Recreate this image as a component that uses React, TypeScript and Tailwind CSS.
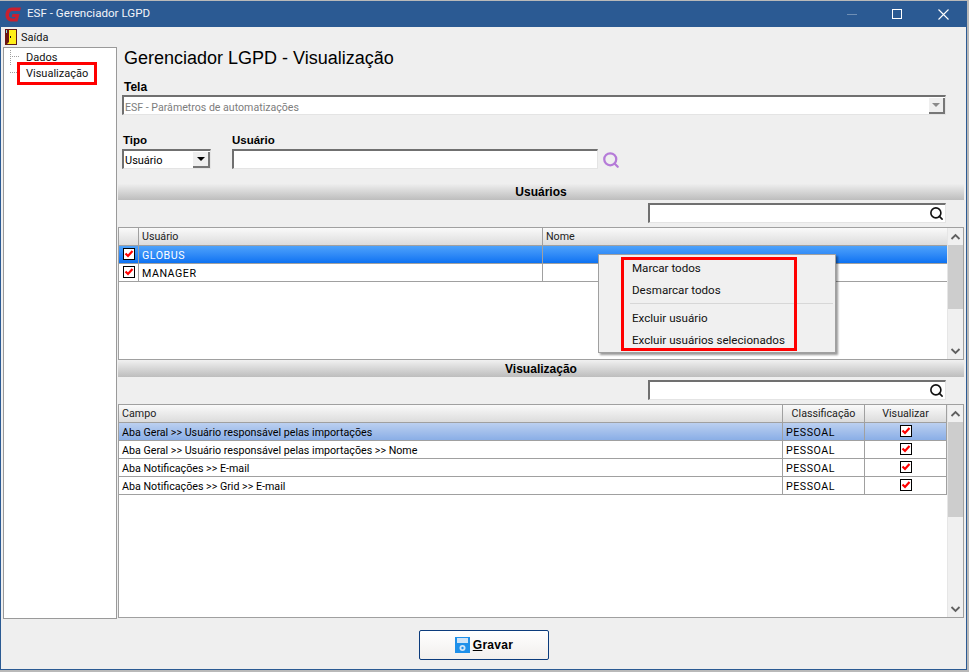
import { Search } from "lucide-react";

const font = "font-['Roboto',Arial,sans-serif]";
const sunken = "border border-t-2 border-l-2 border-t-[#707070] border-l-[#707070] border-r-[#e4e4e4] border-b-[#e4e4e4] bg-white";

function Check() {
  return (
    <svg width="12" height="12" viewBox="0 0 12 12" className="block">
      <rect x="0.5" y="0.5" width="11" height="11" fill="#fff" stroke="#000" />
      <path d="M2.5 5.5 L5 8 L9.5 3" fill="none" stroke="#f00" strokeWidth="2.2" />
    </svg>
  );
}

function Arrow({ dir }: { dir: "up" | "down" }) {
  return (
    <svg width="11" height="8" viewBox="0 0 11 8">
      <path d={dir === "up" ? "M1.5 6 L5.5 2 L9.5 6" : "M1.5 2 L5.5 6 L9.5 2"} fill="none" stroke="#606060" strokeWidth="1.8" />
    </svg>
  );
}

function SectionBar({ title }: { title: string }) {
  return (
    <div className="flex h-[16px] items-center justify-center bg-gradient-to-b from-[#eeeeee] to-[#bdbdbd] font-['Liberation_Sans',Arial,sans-serif] text-[12px] font-bold leading-none text-black">
      {title}
    </div>
  );
}

function SearchBox() {
  return (
    <div className="flex h-[27px] items-start justify-end pt-[3px] pr-[18px]">
      <div className={`flex h-[20px] w-[298px] items-center justify-end pr-[1px] ${sunken}`}>
        <Search size={15} strokeWidth={2.6} color="#111" />
      </div>
    </div>
  );
}

function Scrollbar({ thumb }: { thumb: number }) {
  return (
    <div className="flex w-[16px] flex-col border-l border-[#e6e6e6] bg-[#f0f0f0]">
      <div className="flex h-[17px] items-center justify-center"><Arrow dir="up" /></div>
      <div className="flex-1">
        <div className="bg-[#cdcdcd]" style={{ height: thumb }} />
      </div>
      <div className="flex h-[17px] items-center justify-center"><Arrow dir="down" /></div>
    </div>
  );
}

const headCell = "flex h-[18px] items-center border-r border-b border-[#a0a0a0] bg-gradient-to-b from-[#fafafa] to-[#dcdcdc] px-[3px] pt-[1px] text-[10.7px] text-[#222]";
const rowCell = "flex h-[18px] items-center border-r border-b border-[#a0a0a0] px-[3px] pt-[3px] text-[10.7px]";
const checkCell = "flex h-[18px] items-center justify-center border-r border-b border-[#a0a0a0] pb-[1px]";

const campos = [
  "Aba Geral >> Usuário responsável pelas importações",
  "Aba Geral >> Usuário responsável pelas importações >> Nome",
  "Aba Notificações >> E-mail",
  "Aba Notificações >> Grid >> E-mail",
];

export default function App() {
  return (
    <div className={`flex h-[672px] w-[969px] flex-col overflow-hidden bg-[#b9b9b9] ${font} text-[11px] text-black`}>
      <div className="mt-[1px] mr-[2px] flex h-[669px] flex-col border-x border-b border-[#2b5a93] bg-[#efefef]">
        {/* barra de titulo */}
        <div className="flex h-[26px] shrink-0 items-center bg-[#2b5a93] pl-[4px] text-white">
          <svg width="17" height="17" viewBox="0 0 17 17">
            <path d="M16 1.5 L7 1.5 C3 1.5 0.5 5 0.5 9 C0.5 13 3 15.5 7 15.5 L12.5 15.5 L14.5 8 L7.5 8 L6.7 11 L10.5 11 L10 12.5 L7.5 12.5 C5.2 12.5 4 11 4 9 C4 6.5 5.6 5 7.5 5 L15 5 Z" fill="#c8202f" />
          </svg>
          <span className="ml-[5px] text-[11.6px] text-[#f2f5f9]">ESF - Gerenciador LGPD</span>
          <div className="ml-auto flex items-center">
            <div className="h-[1px] w-[10px] bg-[#6f8fb5]" />
            <div className="ml-[35px] h-[10px] w-[10px] border border-white" />
            <svg width="11" height="11" viewBox="0 0 11 11" className="mr-[17px] ml-[36px]">
              <path d="M0.5 0.5 L10.5 10.5 M10.5 0.5 L0.5 10.5" stroke="#fff" strokeWidth="1.1" />
            </svg>
          </div>
        </div>

        {/* menu */}
        <div className="flex h-[19px] shrink-0 items-center pl-[4px]">
          <svg width="12" height="16" viewBox="0 0 12 16">
            <rect width="12" height="16" fill="#ffef1a" />
            <path d="M0 0 H4 V13 L1 16 H0 Z" fill="#6b1515" />
            <rect x="4" y="0" width="8" height="1" fill="#5b1b1b" />
            <rect x="11" y="0" width="1" height="16" fill="#5b1b1b" />
            <rect x="1" y="15" width="11" height="1" fill="#5b1b1b" />
            <rect x="5" y="7" width="1" height="2" fill="#111" />
            <rect x="1" y="1" width="1" height="3" fill="#7fd4e0" />
          </svg>
          <span className="ml-[4px] pt-[3px] text-[11px] text-[#111]">Saída</span>
        </div>

        <div className="flex flex-1">
          {/* arvore */}
          <div className="relative ml-[2px] mt-[1px] h-[572px] w-[114px] border border-[#9a9a9a] bg-white">
            <div className="mt-[2px] ml-[6px] h-[15px] border-l border-dotted border-[#a0a0a0]" />
            <div className="absolute top-[8px] left-[6px] h-[1px] w-[9px] border-t border-dotted border-[#a0a0a0]" />
            <div className="absolute top-[24px] left-[6px] h-[1px] w-[9px] border-t border-dotted border-[#a0a0a0]" />
            <div className="absolute top-[2px] left-[22px] text-[11px] leading-[15px] text-[#111]">Dados</div>
            <div className="absolute top-[18px] left-[22px] text-[11px] leading-[15px] text-[#111]">Visualização</div>
            <div className="absolute top-[14px] left-[13px] h-[23px] w-[80px] border-[3px] border-[#f00]" />
          </div>

          {/* conteudo */}
          <div className="ml-[1px] flex w-[846px] flex-col">
            <div className="pl-[6px] pt-[1px]">
              <h1 className="h-[24px] font-['Liberation_Sans',Arial,sans-serif] text-[18px] leading-[22px] text-black">Gerenciador LGPD - Visualização</h1>
              <div className="mt-[9px] h-[14px] font-['Liberation_Sans',Arial,sans-serif] text-[12px] font-bold leading-[14px]">Tela</div>
              <div className="-ml-[2px] mt-[1px] flex h-[20px] w-[824px] items-center justify-between border border-t-2 border-l-2 border-t-[#707070] border-l-[#707070] border-r-[#e4e4e4] border-b-[#e4e4e4] bg-white pl-[1px]">
                <span className="pt-[4px] text-[10.6px] text-[#7d7d7d]">ESF - Parâmetros de automatizações</span>
                <div className="flex h-[16px] w-[16px] items-center justify-center border-r-2 border-b-2 border-[#777] bg-[#efefef]">
                  <div className="h-0 w-0 border-x-[4px] border-t-[4px] border-x-transparent border-t-[#8a8a8a]" />
                </div>
              </div>
            </div>

            <div className="mt-[18px] flex items-start pl-[4px] font-['Liberation_Sans',Arial,sans-serif]">
              <div className="w-[110px]">
                <div className="h-[14px] pl-[1px] text-[11.5px] font-bold leading-[14px]">Tipo</div>
                <div className={`mt-[2px] flex h-[20px] w-[89px] items-center justify-between pl-[1px] ${sunken}`}>
                  <span className="pt-[3px] font-['Roboto',Arial,sans-serif] text-[11px]">Usuário</span>
                  <div className="flex h-[16px] w-[17px] items-center justify-center border-r-2 border-b-2 border-[#777] bg-[#efefef]">
                    <div className="h-0 w-0 border-x-[4px] border-t-[4px] border-x-transparent border-t-black" />
                  </div>
                </div>
              </div>
              <div>
                <div className="h-[14px] text-[11.5px] font-bold leading-[14px]">Usuário</div>
                <div className="mt-[2px] flex items-center">
                  <div className={`h-[20px] w-[366px] ${sunken}`} />
                  <Search size={18} strokeWidth={3} color="#b57bd8" className="ml-[4px] mt-[2px]" />
                </div>
              </div>
            </div>

            <div className="mt-[15px]">
              <SectionBar title="Usuários" />
              <SearchBox />
              {/* tabela usuarios */}
              <div className="relative flex h-[133px] w-[846px] border border-[#a0a0a0] bg-white">
                <div className="flex-1">
                  <div className="grid grid-cols-[20px_404px_1fr]">
                    <div className={headCell} />
                    <div className={headCell}>Usuário</div>
                    <div className={`${headCell} border-r-0`}>Nome</div>
                    <div className={`${checkCell} bg-gradient-to-b from-[#4da2fb] to-[#0a72f2]`}><Check /></div>
                    <div className={`${rowCell} bg-gradient-to-b from-[#4da2fb] to-[#0a72f2] tracking-[0.5px] text-white`}>GLOBUS</div>
                    <div className={`${rowCell} border-r-0 bg-gradient-to-b from-[#4da2fb] to-[#0a72f2]`} />
                    <div className={checkCell}><Check /></div>
                    <div className={`${rowCell} tracking-[0.5px]`}>MANAGER</div>
                    <div className={`${rowCell} border-r-0`} />
                  </div>
                </div>
                <Scrollbar thumb={64} />

                {/* menu de contexto */}
                <div className="absolute top-[26px] left-[479px] flex h-[99px] w-[238px] flex-col border border-[#a0a0a0] bg-[#f0f0f0] pl-[33px] text-[11.6px] text-[#111] shadow-[2px_2px_2px_rgba(0,0,0,0.4)]">
                  <div className="mt-[2px] flex h-[24px] items-center">Marcar todos</div>
                  <div className="flex h-[20px] items-center">Desmarcar todos</div>
                  <div className="-ml-[2px] mr-[2px] mt-[2px] mb-[4px] h-[1px] bg-[#d7d7d7]" />
                  <div className="flex h-[22px] items-center">Excluir usuário</div>
                  <div className="flex h-[21px] items-center">Excluir usuários selecionados</div>
                  <div className="absolute top-[2px] left-[22px] h-[94px] w-[176px] border-[3px] border-[#f00]" />
                </div>
              </div>
              <div className="h-[1px]" />
            </div>

            <div>
              <SectionBar title="Visualização" />
              <SearchBox />
              {/* tabela campos */}
              <div className="flex h-[214px] w-[846px] border border-[#a0a0a0] bg-white">
                <div className="flex-1">
                  <div className="grid grid-cols-[664px_82px_1fr]">
                    <div className={`${headCell} px-[2px]`}>Campo</div>
                    <div className={`${headCell} justify-center`}>Classificação</div>
                    <div className={`${headCell} justify-center`}>Visualizar</div>
                    {campos.map((c, i) => {
                      const sel = i === 0 ? "bg-gradient-to-b from-[#bcd0f0] to-[#8aaee6]" : "";
                      return [
                        <div key={c} className={`${rowCell} px-[2px] ${sel}`}>{c}</div>,
                        <div key={c + "p"} className={`${rowCell} tracking-[0.5px] ${sel}`}>PESSOAL</div>,
                        <div key={c + "v"} className={`${checkCell} ${sel}`}><Check /></div>,
                      ];
                    })}
                  </div>
                </div>
                <Scrollbar thumb={95} />
              </div>
            </div>
          </div>
        </div>

        {/* rodape */}
        <div className="flex h-[50px] shrink-0 items-start justify-center pt-[11px] pl-[1px]">
          <button className="flex h-[30px] w-[130px] items-center justify-center rounded-[2px] border border-[#0b3b7c] bg-gradient-to-b from-white to-[#f1efed] font-['Liberation_Sans',Arial,sans-serif] text-[12px] font-bold tracking-[0.3px]">
            <svg width="15" height="16" viewBox="0 0 15 16" className="mr-[3px]">
              <rect width="15" height="16" fill="#1e90ea" />
              <rect x="2" y="1" width="11" height="5" fill="#cfe4f7" />
              <circle cx="7.5" cy="11" r="3" fill="#cfe4f7" />
              <circle cx="7.5" cy="11" r="1.2" fill="#1e90ea" />
            </svg>
            <span><u>G</u>ravar</span>
          </button>
        </div>
      </div>
    </div>
  );
}
